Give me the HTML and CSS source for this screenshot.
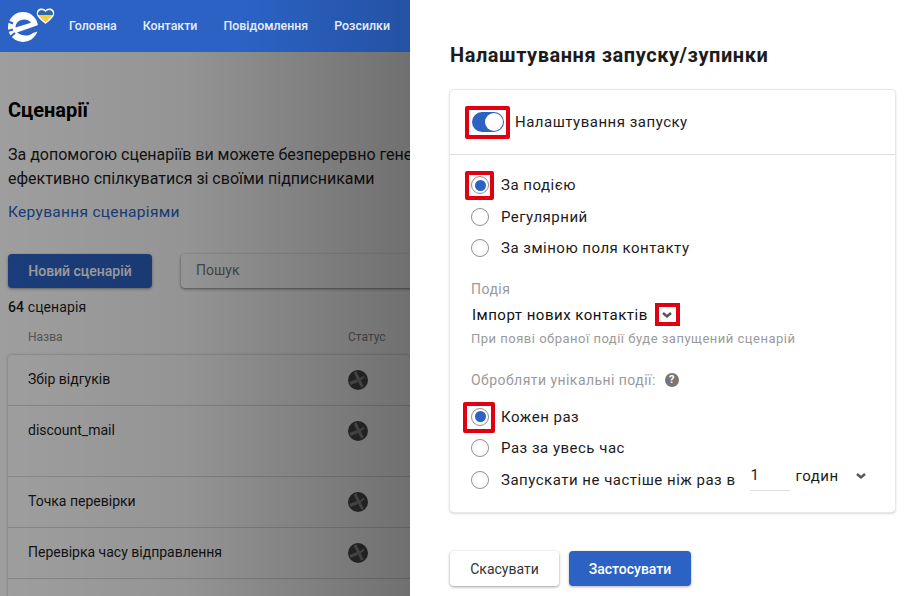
FILE: index.html
```html
<!DOCTYPE html>
<html lang="uk">
<head>
<meta charset="utf-8">
<title>Сценарії</title>
<link rel="stylesheet" href="styles.css">
</head>
<body>
<div class="page">
  <div class="back">
    <header class="topbar">
      <svg class="logo" width="56" height="52" viewBox="0 0 56 52">
        <circle cx="23" cy="27" r="15" fill="#fff"/>
        <path d="M15.500 27.500C15.500 19 27 17 31 22.800Z" fill="#2b62c4"/>
        <path d="M17 32.600L39 24.800V31L33 33C29 36.500 22 36.500 17 32.600Z" fill="#2b62c4"/>
        <g fill="none" stroke="#2b62c4" stroke-width="2">
          <path d="M6 20.500l7 3"/>
          <path d="M6 31.500l7-2"/>
          <path d="M9 38l6-5"/>
        </g>
        <g transform="translate(0 1.500)">
          <path d="M45.500 21.500c-4-3-8-6-8-9.500 0-5 5.500-5.500 8-2.500 2.500-3 8-2.500 8 2.500 0 3.500-4 6.500-8 9.500z" fill="#f7cf3c" stroke="#fff" stroke-width="1.400"/>
          <path d="M38.100 13.500c-.8-5 4.900-5.900 7.400-3 2.500-2.900 8.200-2 7.400 3z" fill="#2c6aa8"/>
        </g>
      </svg>
      <nav class="menu">
        <a>Головна</a>
        <a>Контакти</a>
        <a>Повідомлення</a>
        <a>Розсилки</a>
      </nav>
    </header>
    <main class="content">
      <h1>Сценарії</h1>
      <p class="intro">За допомогою сценаріїв ви можете безперервно генерувати<br>ефективно спілкуватися зі своїми підписниками</p>
      <a class="manage">Керування сценаріями</a>
      <div class="tools">
        <button class="new">Новий сценарій</button>
        <div class="search">Пошук</div>
      </div>
      <div class="count"><b>64</b> сценарія</div>
      <div class="thead"><span class="c-name">Назва</span><span>Статус</span></div>
      <div class="table">
        <div class="row"><span class="c-name">Збір відгуків</span><svg class="st" viewBox="0 0 20 20"><use href="#st"/></svg></div>
        <div class="row tall"><span class="c-name">discount_mail</span><svg class="st" viewBox="0 0 20 20"><use href="#st"/></svg></div>
        <div class="row"><span class="c-name">Точка перевірки</span><svg class="st" viewBox="0 0 20 20"><use href="#st"/></svg></div>
        <div class="row"><span class="c-name">Перевірка часу відправлення</span><svg class="st" viewBox="0 0 20 20"><use href="#st"/></svg></div>
        <div class="row"></div>
      </div>
    </main>
    <div class="shade"></div>
  </div>
  <aside class="panel">
    <h2>Налаштування запуску/зупинки</h2>
    <section class="card">
      <div class="card-head">
        <span class="mark"><span class="toggle"><i></i></span></span>
        <span class="head-label">Налаштування запуску</span>
      </div>
      <div class="card-body">
        <div class="radios">
          <label class="radio"><span class="dot on mark"></span>За подією</label>
          <label class="radio"><span class="dot"></span>Регулярний</label>
          <label class="radio"><span class="dot"></span>За зміною поля контакту</label>
        </div>
        <div class="field-title">Подія</div>
        <div class="select"><span>Імпорт нових контактів</span><span class="chev-box"><svg class="chev" viewBox="0 0 12 8"><path d="M2 2l4 3.500L10 2"/></svg></span></div>
        <div class="hint">При появі обраної події буде запущений сценарій</div>
        <div class="field-title second"><span>Обробляти унікальні події:</span><span class="q">?</span></div>
        <div class="radios">
          <label class="radio"><span class="dot on mark wide"></span>Кожен раз</label>
          <label class="radio"><span class="dot"></span>Раз за увесь час</label>
          <label class="radio"><span class="dot"></span><span>Запускати не частіше ніж раз в</span><span class="num">1</span><span class="unit">годин</span><svg class="chev unit-chev" viewBox="0 0 12 8"><path d="M2 2l4 3.500L10 2"/></svg></label>
        </div>
      </div>
    </section>
    <div class="actions">
      <button class="cancel">Скасувати</button>
      <button class="apply">Застосувати</button>
    </div>
  </aside>
</div>
<svg class="defs" width="0" height="0"><defs><g id="st"><circle cx="10" cy="10" r="10" fill="#484848"/><g fill="none" stroke="#8c8c8c"><path d="M7 2l7.500 15" stroke-width="2.800"/><path d="M2 13.500l7.500-3" stroke-width="3.200"/><path d="M12 9.500l4-3" stroke-width="2"/></g></g></defs></svg>
</body>
</html>
```
FILE: styles.css
```css
* { box-sizing: border-box; }
html, body { margin: 0; height: 100%; overflow: hidden; }
body { font-family: Roboto, "Noto Sans", sans-serif; color: #1c1c1c; background: #fff; }
.page { display: flex; width: 908px; height: 596px; }
.back { position: relative; width: 410px; flex: none; overflow: hidden; background: #fff; }
.topbar { position: relative; z-index: 1; display: flex; align-items: center; height: 52px; background: linear-gradient(90deg, #2b62c4, #2b62c4 60%, #2452a4); }
.logo { flex: none; margin-right: 13px; }
.menu { display: flex; gap: 26px; margin-bottom: 2px; white-space: nowrap; }
.menu a { font-size: 12.400px; font-weight: 500; color: #e6edf8; }
.content { padding: 46px 0 0 8px; }
h1 { margin: 0; font-size: 20px; line-height: 24px; font-weight: 700; color: #000; }
.intro { margin: 21px 0 0; width: 640px; font-size: 16px; line-height: 24px; white-space: nowrap; }
.manage { display: block; margin-top: 9px; font-size: 15.500px; line-height: 24px; color: #2b62c4; letter-spacing: .3px; }
.tools { display: flex; gap: 29px; margin-top: 30px; }
.new { flex: none; width: 144px; height: 34px; border: 0; border-radius: 4px; background: #2b62c4; color: #fff; font: 500 14px Roboto, sans-serif; box-shadow: 0 1px 3px rgba(0,0,0,.4); }
.search { flex: none; width: 400px; height: 34px; padding: 7px 15px; border-radius: 4px; background: #fff; font-size: 14px; line-height: 18px; color: #777; box-shadow: 0 1px 3px rgba(0,0,0,.5); }
.count { margin-top: 10px; font-size: 14px; line-height: 18px; letter-spacing: .1px; }
.count b { font-weight: 500; }
.thead { display: flex; margin-top: 13px; height: 18px; font-size: 12px; line-height: 16px; color: #888; }
.c-name { display: block; width: 340px; flex: none; padding-left: 20px; }
.table { margin-top: 8px; border-radius: 4px 4px 0 0; box-shadow: 0 0 3px rgba(0,0,0,.3); }
.row { display: flex; align-items: flex-start; height: 51px; padding-top: 14px; border-bottom: 1px solid #d8d8d8; font-size: 14px; line-height: 20px; }
.row.tall { height: 71px; }
.st { width: 20px; height: 20px; flex: none; margin-top: 1px; }
.shade { position: absolute; inset: 0; background: linear-gradient(90deg, rgba(0,0,0,.38), rgba(0,0,0,.42) 45%, rgba(0,0,0,.56)); }
.panel { flex: 1; padding: 43px 13px 0 40px; background: #fff; }
h2 { margin: 0; font-size: 20px; line-height: 24px; font-weight: 700; color: #1c1c1c; letter-spacing: .55px; }
.card { margin-top: 23px; width: 445px; height: 422px; border-radius: 4px; background: #fff; box-shadow: 0 0 0 1px #e8e8e8, 0 1px 3px rgba(0,0,0,.3); }
.card-head { display: flex; align-items: center; gap: 11px; height: 65px; padding-left: 22px; border-bottom: 1px solid #ddd; }
.head-label { font-size: 15px; letter-spacing: .5px; }
.mark { position: relative; }
.mark::after { content: ""; position: absolute; inset: -6px -6px -7px -7px; border: 4px solid #e00012; border-radius: 2px; }
.mark.wide::after { inset: -7px -7px -8px -9px; }
.toggle { display: block; position: relative; width: 32px; height: 20px; border-radius: 10px; background: #2b62c4; }
.toggle i { position: absolute; right: 1px; top: 1px; width: 18px; height: 18px; border-radius: 50%; background: #fff; }
.card-body { padding: 14.400px 0 0 21px; }
.radios { display: flex; flex-direction: column; }
.radio { display: flex; align-items: center; height: 31.500px; font-size: 15px; letter-spacing: .5px; white-space: nowrap; }
.dot { position: relative; flex: none; width: 18px; height: 18px; margin-right: 12px; border: 1px solid #8f8f8f; border-radius: 50%; background: #fff; }
.dot.on::before { content: ""; position: absolute; inset: 2.500px; border-radius: 50%; background: #2b62c4; }
.field-title { margin-top: 16.100px; font-size: 14px; line-height: 18px; color: #9a9a9a; letter-spacing: .45px; }
.field-title.second { display: flex; align-items: center; gap: 9px; margin-top: 23px; margin-bottom: 12.250px; }
.q { display: block; width: 14px; height: 14px; border-radius: 50%; background: #777; color: #fff; font-size: 11px; line-height: 14px; text-align: center; font-weight: 700; letter-spacing: 0; }
.select { display: flex; align-items: center; height: 24px; margin-top: 5px; padding-left: 1px; font-size: 15px; letter-spacing: .5px; color: #111; }
.chev-box { display: block; flex: none; width: 17px; height: 15px; margin-left: 11px; outline: 4px solid #e00012; }
.chev { display: block; width: 12px; height: 8px; fill: none; stroke: #555; stroke-width: 2.400; }
.chev-box .chev { margin: 3.500px 2.500px; }
.hint { margin-top: 3px; font-size: 13px; line-height: 18px; color: #9a9a9a; letter-spacing: .5px; }
.num { display: block; flex: none; width: 40px; height: 30px; margin: -7px 6px 0 14px; padding-left: 1px; border-bottom: 1px solid #ddd; line-height: 28px; }
.unit { margin-top: -8px; }
.unit-chev { flex: none; margin: -8px 0 0 16px; }
.actions { display: flex; gap: 10px; margin-top: 39px; }
.cancel, .apply { height: 35px; border: 0; border-radius: 4px; font: 14px Roboto, sans-serif; }
.cancel { width: 109px; background: #fff; color: #333; box-shadow: 0 1px 3px rgba(0,0,0,.4); }
.apply { width: 122px; background: #2b62c4; color: #fff; font-weight: 500; box-shadow: 0 1px 3px rgba(0,0,0,.3); }
.defs { position: absolute; }
```
